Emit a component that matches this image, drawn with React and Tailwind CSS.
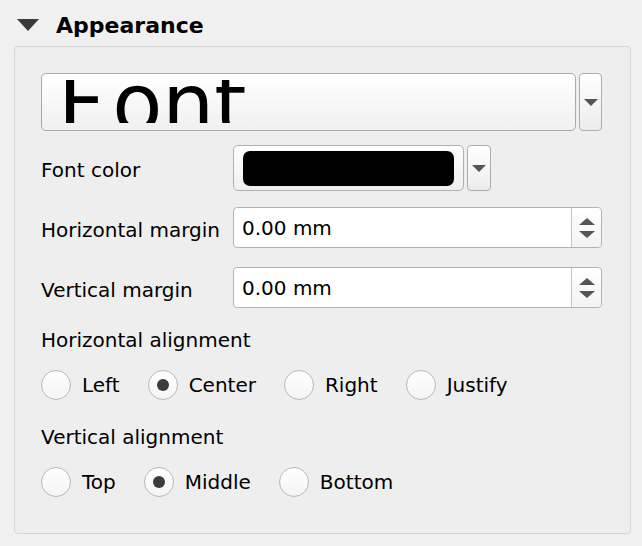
import React from 'react';

const DownArrow = ({ w = 14, h = 7 }) => (
    <svg width={w} height={h} viewBox="0 0 14 7">
        <path d="M0 0 L14 0 L7 7 Z" fill="#555555" />
    </svg>
);

const UpArrow = ({ w = 16, h = 7 }) => (
    <svg width={w} height={h} viewBox="0 0 16 7">
        <path d="M8 0 L16 7 L0 7 Z" fill="#555555" />
    </svg>
);

const DropButton = ({ className }) => (
    <div className={`flex items-center justify-center rounded-[4px] border border-[#adadad] bg-gradient-to-b from-white to-[#ececec] ${className}`}>
        <DownArrow />
    </div>
);

const SpinBox = ({ value }) => (
    <div className="flex h-[41px] w-[369px] rounded-[4px] border border-[#b3b3b3] bg-white">
        <div className="flex flex-1 items-center pl-[8px]">{value}</div>
        <div className="flex w-[30px] flex-col items-center justify-center gap-[6px] border-l border-[#c4c4c4] bg-gradient-to-b from-white to-[#f3f3f3] rounded-r-[4px]">
            <UpArrow />
            <svg width="16" height="7" viewBox="0 0 16 7">
                <path d="M0 0 L16 0 L8 7 Z" fill="#555555" />
            </svg>
        </div>
    </div>
);

const Radio = ({ label, checked }) => (
    <div className="flex items-center gap-[11px]">
        <div className="flex h-[30px] w-[30px] items-center justify-center rounded-full border-[1.5px] border-[#b8b8b8] bg-gradient-to-b from-white to-[#f4f4f4]">
            {checked && <div className="h-[12px] w-[12px] rounded-full bg-[#3c3c3c]" />}
        </div>
        <span>{label}</span>
    </div>
);

const App = () => {
    return (
        <div className="h-[546px] w-[642px] overflow-hidden bg-[#f0f0f0] font-['DejaVu_Sans',sans-serif] text-[20px] text-black">
            {/* Section header */}
            <div className="flex h-[46px] items-center gap-[17px] pl-[17px] pt-[4px]">
                <svg width="22" height="12" viewBox="0 0 22 12">
                    <path d="M0 0 L22 0 L11 12 Z" fill="#3a3a3a" />
                </svg>
                <span className="text-[22px] font-bold">Appearance</span>
            </div>

            {/* Group box */}
            <div className="ml-[14px] h-[488px] w-[617px] rounded-[4px] border border-[#d6d6d6] bg-[#eeeeee] pl-[26px] pt-[26px]">
                {/* Font button, preview text is clipped like the original */}
                <div className="flex gap-[3px]">
                    <div className="h-[58px] w-[535px] rounded-[5px] border border-[#a9a9a9] bg-gradient-to-b from-white to-[#f0f0f0] pb-[7px] pl-[16px] pt-[6px]">
                        <div className="h-[43px] overflow-hidden">
                            <div className="-mt-[17px] whitespace-nowrap text-[82px] leading-[82px]">
                                <span className="mr-[7px]">F</span>ont
                            </div>
                        </div>
                    </div>
                    <DropButton className="h-[58px] w-[23px]" />
                </div>

                {/* Font color */}
                <div className="mt-[14px] flex h-[46px] items-center">
                    <span className="w-[192px] pt-[4px]">Font color</span>
                    <div className="flex h-[46px] gap-[3px]">
                        <div className="flex h-[46px] w-[231px] items-center justify-center rounded-[5px] border border-[#b0b0b0] bg-gradient-to-b from-white to-[#efefef]">
                            <div className="h-[35px] w-[211px] rounded-[7px] bg-black" />
                        </div>
                        <DropButton className="h-[46px] w-[24px]" />
                    </div>
                </div>

                {/* Horizontal margin */}
                <div className="mt-[16px] flex items-center">
                    <span className="w-[192px] pt-[4px]">Horizontal margin</span>
                    <SpinBox value="0.00 mm" />
                </div>

                {/* Vertical margin */}
                <div className="mt-[19px] flex items-center">
                    <span className="w-[192px] pt-[4px]">Vertical margin</span>
                    <SpinBox value="0.00 mm" />
                </div>

                <div className="mt-[20px] h-[24px] leading-[24px]">Horizontal alignment</div>
                <div className="mt-[18px] flex h-[30px] items-center gap-[28px]">
                    <Radio label="Left" />
                    <Radio label="Center" checked />
                    <Radio label="Right" />
                    <Radio label="Justify" />
                </div>

                <div className="mt-[25px] h-[24px] leading-[24px]">Vertical alignment</div>
                <div className="mt-[18px] flex h-[30px] items-center gap-[28px]">
                    <Radio label="Top" />
                    <Radio label="Middle" checked />
                    <Radio label="Bottom" />
                </div>
            </div>
        </div>
    );
};

export default App;
